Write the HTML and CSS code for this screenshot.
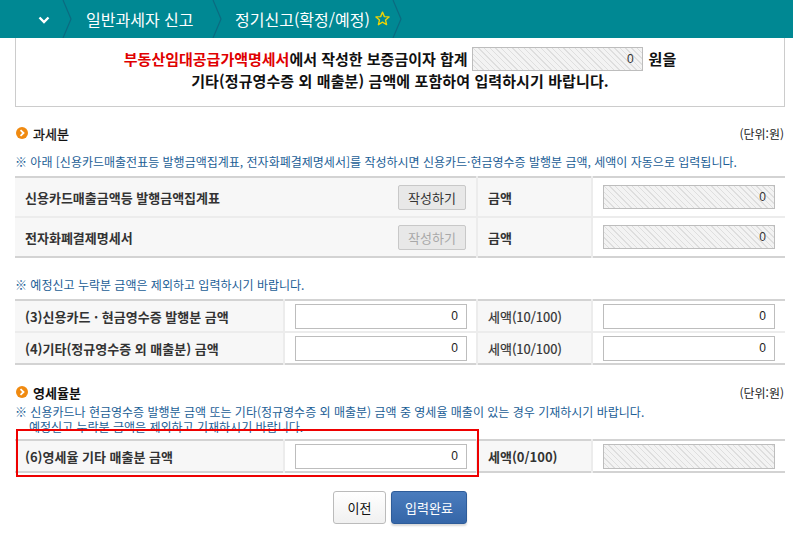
FILE: index.html
```html
<!DOCTYPE html>
<html lang="ko">
<head>
<meta charset="utf-8">
<link rel="stylesheet" href="styles.css">
</head>
<body>
<div class="topnav">
  <div class="nav-home">
    <svg width="12" height="8" viewBox="0 0 12 8"><polyline points="1.5,1.5 6,6 10.5,1.5" fill="none" stroke="#fff" stroke-width="2.4"/></svg>
  </div>
  <div class="sep"><svg width="10" height="38" viewBox="0 0 10 38"><polyline points="1,0 9,19 1,38" fill="none" stroke="#0b6b80" stroke-width="1.2"/></svg></div>
  <div class="nav-item first">일반과세자 신고</div>
  <div class="sep"><svg width="10" height="38" viewBox="0 0 10 38"><polyline points="1,0 9,19 1,38" fill="none" stroke="#0b6b80" stroke-width="1.2"/></svg></div>
  <div class="nav-item cur">정기신고(확정/예정)
    <svg class="star" width="15" height="15" viewBox="0 0 16 16"><polygon points="8,1.2 10,6 15,6.3 11.2,9.6 12.4,14.6 8,11.9 3.6,14.6 4.8,9.6 1,6.3 6,6" fill="none" stroke="#f2d400" stroke-width="1.4" stroke-linejoin="round"/></svg>
  </div>
  <div class="sep"><svg width="10" height="38" viewBox="0 0 10 38"><polyline points="1,0 9,19 1,38" fill="none" stroke="#0b6b80" stroke-width="1.2"/></svg></div>
</div>

<div class="content">
  <div class="infobox">
    <p class="line1"><span class="red">부동산임대공급가액명세서</span>에서 작성한 보증금이자 합계 <span class="ro-input wide">0</span> 원을</p>
    <p class="line2">기타(정규영수증 외 매출분) 금액에 포함하여 입력하시기 바랍니다.</p>
  </div>

  <div class="sec-head first">
    <h3><span class="bullet"><svg width="8" height="8" viewBox="0 0 8 8"><polyline points="2.5,1.2 5.5,4 2.5,6.8" fill="none" stroke="#fff" stroke-width="1.8"/></svg></span>과세분</h3>
    <span class="unit">(단위:원)</span>
  </div>
  <p class="note n1">※ 아래 [신용카드매출전표등 발행금액집계표, 전자화폐결제명세서]를 작성하시면 신용카드·현금영수증 발행분 금액, 세액이 자동으로 입력됩니다.</p>

  <table class="grid t1">
    <colgroup><col class="c462"><col class="c115"><col class="c193"></colgroup>
    <tr>
      <th><div class="lab-btn"><span>신용카드매출금액등 발행금액집계표</span><button class="btn-s">작성하기</button></div></th>
      <th>금액</th>
      <td><span class="ro-input">0</span></td>
    </tr>
    <tr>
      <th><div class="lab-btn"><span>전자화폐결제명세서</span><button class="btn-s dis">작성하기</button></div></th>
      <th>금액</th>
      <td><span class="ro-input">0</span></td>
    </tr>
  </table>

  <p class="note n2">※ 예정신고 누락분 금액은 제외하고 입력하시기 바랍니다.</p>

  <table class="grid t2">
    <colgroup><col class="c269"><col class="c193"><col class="c115"><col class="c193"></colgroup>
    <tr>
      <th>(3)신용카드 · 현금영수증 발행분 금액</th>
      <td><span class="in">0</span></td>
      <th class="normal">세액(10/100)</th>
      <td><span class="in">0</span></td>
    </tr>
    <tr>
      <th>(4)기타(정규영수증 외 매출분) 금액</th>
      <td><span class="in">0</span></td>
      <th class="normal">세액(10/100)</th>
      <td><span class="in">0</span></td>
    </tr>
  </table>

  <div class="sec-head second">
    <h3 class="bold"><span class="bullet"><svg width="8" height="8" viewBox="0 0 8 8"><polyline points="2.5,1.2 5.5,4 2.5,6.8" fill="none" stroke="#fff" stroke-width="1.8"/></svg></span>영세율분</h3>
    <span class="unit">(단위:원)</span>
  </div>
  <div class="note n3">
    <p class="nl">※ 신용카드나 현금영수증 발행분 금액 또는 기타(정규영수증 외 매출분) 금액 중 영세율 매출이 있는 경우 기재하시기 바랍니다.</p>
    <p class="nl indent">예정신고 누락분 금액은 제외하고 기재하시기 바랍니다.</p>
  </div>

  <div class="t3wrap">
    <table class="grid t3">
      <colgroup><col class="c269"><col class="c193"><col class="c115"><col class="c193"></colgroup>
      <tr>
        <th>(6)영세율 기타 매출분 금액</th>
        <td><span class="in">0</span></td>
        <th>세액(0/100)</th>
        <td><span class="ro-input blank"></span></td>
      </tr>
    </table>
    <div class="highlight"></div>
  </div>

  <div class="actions">
    <button class="btn-prev">이전</button>
    <button class="btn-done">입력완료</button>
  </div>
</div>
</body>
</html>
```

FILE: styles.css
```css
* { box-sizing: border-box; }
html, body { margin: 0; padding: 0; background: #fff; }
body {
  font-family: "Liberation Sans", "Noto Sans CJK KR", sans-serif;
  font-size: 12px;
  color: #333;
  width: 793px;
  height: 542px;
  overflow: hidden;
}
.topnav {
  height: 38px;
  background: #008893;
  display: flex;
  align-items: center;
  color: #fff;
}
.nav-home {
  width: 62px;
  height: 38px;
  display: flex;
  align-items: center;
  justify-content: flex-end;
  padding-right: 12px;
  padding-top: 2px;
}
.sep { width: 10px; height: 38px; }
.sep svg { display: block; }
.nav-item {
  font-family: "Noto Sans CJK KR", sans-serif;
  font-size: 16px;
  line-height: 38px;
  padding: 0 0 0 14px;
  display: flex;
  align-items: center;
  white-space: nowrap;
}
.nav-item.first { width: 140px; }
.nav-item.cur { padding-left: 13px; padding-right: 2px; }
.star { margin-left: 5px; margin-top: -2px; }

.content { padding: 0 8px 0 15px; }
.infobox {
  border: 1px solid #ccc;
  border-top: none;
  height: 69px;
  padding-top: 9px;
  text-align: center;
  font-family: "Noto Sans CJK KR", sans-serif;
  font-size: 15px;
  font-weight: bold;
  color: #111;
}
.infobox p { margin: 0; line-height: 20px; }
.line1 { height: 24px; display: flex; justify-content: center; align-items: center; }
.line1 .ro-input { margin: 0 6px 0 4px; font-weight: normal; }
.line2 { margin-top: 0; letter-spacing: 0.1px; }
.red { color: #e00000; }

.ro-input {
  display: inline-block;
  height: 24px;
  width: 172px;
  border: 1px solid #bdbdbd;
  background: repeating-linear-gradient(45deg, #f3f3f3 0 3px, #dedede 3px 4px);
  text-align: right;
  padding-right: 8px;
  line-height: 22px;
  font-size: 12px;
  color: #333;
  font-family: "Liberation Sans", sans-serif;
}
.ro-input.wide { width: 171px; }

.sec-head {
  display: flex;
  justify-content: space-between;
  align-items: center;
  height: 18px;
}
.sec-head.first { margin-top: 17px; }
.sec-head.second { margin-top: 18px; }
.sec-head h3 {
  margin: 0;
  font-family: "Noto Sans CJK KR", sans-serif;
  font-size: 13px;
  font-weight: normal;
  color: #111;
  display: flex;
  align-items: center;
  -webkit-text-stroke: 0.3px #111;
}
.sec-head h3.bold { font-weight: bold; -webkit-text-stroke: 0; }
.bullet {
  width: 12px; height: 12px;
  border-radius: 50%;
  background: #f08a10;
  display: inline-flex;
  align-items: center;
  justify-content: center;
  margin: 0 5px 0 1px;
}
.bullet svg { display: block; }
.unit { font-size: 12px; color: #222; font-family: "Noto Sans CJK KR", sans-serif; margin-right: 1px; }

.note {
  margin: 0;
  color: #1b5e96;
  font-family: "Noto Sans CJK KR", sans-serif;
  font-size: 12px;
  line-height: 16px;
  white-space: nowrap;
}
.note.n1 { margin-top: 12px; }
.note.n2 { margin-top: 19px; }
.note.n3 { margin-top: 3px; line-height: 15px; }
.nl { margin: 0; height: 15px; }
.indent { padding-left: 14px; }

.grid {
  width: 770px;
  border-collapse: collapse;
  table-layout: fixed;
  border-top: 2px solid #d3d3d3;
  border-bottom: 2px solid #d3d3d3;
}
.c462 { width: 462px; }
.c115 { width: 115px; }
.c193 { width: 193px; }
.c269 { width: 269px; }
.grid th, .grid td {
  border-left: 2px solid #ececec;
  border-bottom: 2px solid #ececec;
  padding: 0;
}
.grid tr:last-child th, .grid tr:last-child td { border-bottom: none; }
.grid th:first-child { border-left: none; }
.grid th {
  background: #f7f7f7;
  text-align: left;
  padding-left: 10px;
  font-family: "Noto Sans CJK KR", sans-serif;
  font-size: 13px;
  font-weight: bold;
  color: #333;
  white-space: nowrap;
}
.grid th.normal { font-weight: normal; -webkit-text-stroke: 0.2px #333; }
.grid td { background: #fff; padding-left: 10px; }
.t1 { margin-top: 6px; }
.t1 tr { height: 40px; }
.t1 th { padding-left: 10px; }
.lab-btn { display: flex; justify-content: space-between; align-items: center; padding-right: 10px; }
.btn-s {
  font-family: "Noto Sans CJK KR", sans-serif;
  font-size: 13px;
  width: 68px;
  height: 25px;
  border: 1px solid #c8c8c8;
  border-radius: 2px;
  background: #e8e8e8;
  color: #333;
  padding: 0;
  font-weight: normal;
}
.btn-s.dis { color: #a8a8a8; }
.t2 { margin-top: 6px; }
.t2 tr, .t3 tr { height: 32px; }
.in {
  display: block;
  width: 172px;
  height: 25px;
  border: 1px solid #bdbdbd;
  background: #fff;
  text-align: right;
  padding-right: 8px;
  line-height: 23px;
  font-size: 12px;
  color: #222;
  font-family: "Liberation Sans", sans-serif;
}
.t1 .ro-input, .t3 .ro-input { display: block; width: 172px; height: 24px; }
.ro-input.blank { height: 25px; }

.t3wrap { position: relative; margin-top: 5px; }
.highlight {
  position: absolute;
  left: 1px;
  top: -10px;
  width: 463px;
  height: 48px;
  border: 2px solid #ee0000;
}

.actions {
  display: flex;
  justify-content: center;
  gap: 5px;
  margin-top: 18px;
}
.actions button {
  font-family: "Noto Sans CJK KR", sans-serif;
  font-size: 13px;
  height: 33px;
  border-radius: 3px;
  padding: 0;
}
.btn-prev {
  width: 53px;
  background: linear-gradient(#ffffff, #f0f0f0);
  border: 1px solid #bbb;
  color: #111;
}
.btn-done {
  width: 76px;
  background: linear-gradient(#4a7cbd, #3566a8);
  border: 1px solid #2e5c99;
  color: #fff;
  box-shadow: 0 2px 2px rgba(0,0,0,0.15);
}
```
